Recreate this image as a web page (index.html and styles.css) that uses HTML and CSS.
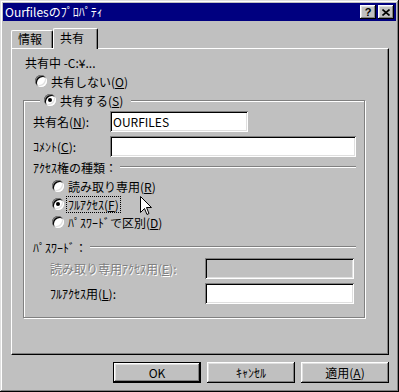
FILE: index.html
```html
<!DOCTYPE html>
<html lang="ja">
<head>
    <meta charset="UTF-8">
    <title>Ourfilesのﾌﾟﾛﾊﾟﾃｨ</title>
    <link rel="stylesheet" href="styles.css">
</head>
<body>
    <div class="window">
        <div class="titlebar">
            <span class="title-text">Ourfilesのﾌﾟﾛﾊﾟﾃｨ</span>
            <span class="title-btn help">?</span>
            <span class="title-btn close">
                <svg width="8" height="7" viewBox="0 0 8 7"><path d="M0.5 0.5 L7.5 6.5 M7.5 0.5 L0.5 6.5" stroke="#000" stroke-width="1.6"/></svg>
            </span>
        </div>

        <div class="dialog">
            <div class="tabs">
                <div class="tab">情報</div>
                <div class="tab active">共有</div>
            </div>

            <div class="panel">
                <div class="share-path">共有中 -C:¥...</div>
                <div class="radio-row">
                    <span class="radio"></span>
                    <span class="radio-text">共有しない(<u>O</u>)</span>
                </div>

                <fieldset class="group">
                    <legend class="group-title">
                        <span class="radio checked"></span>
                        <span class="radio-text">共有する(<u>S</u>)</span>
                    </legend>

                    <div class="field-row first">
                        <label class="field-label">共有名(<u>N</u>):</label>
                        <input class="field name-field" type="text" value="OURFILES">
                    </div>
                    <div class="field-row">
                        <label class="field-label">ｺﾒﾝﾄ(<u>C</u>):</label>
                        <input class="field comment-field" type="text" value="">
                    </div>

                    <div class="section-label">
                        <span>ｱｸｾｽ権の種類：</span>
                        <span class="rule"></span>
                    </div>
                    <div class="radio-row sub first">
                        <span class="radio"></span>
                        <span class="radio-text">読み取り専用(<u>R</u>)</span>
                    </div>
                    <div class="radio-row sub">
                        <span class="radio checked"></span>
                        <span class="radio-text focus">ﾌﾙｱｸｾｽ(<u>F</u>)</span>
                    </div>
                    <div class="radio-row sub">
                        <span class="radio"></span>
                        <span class="radio-text">ﾊﾟｽﾜｰﾄﾞで区別(<u>D</u>)</span>
                    </div>

                    <div class="section-label pw">
                        <span>ﾊﾟｽﾜｰﾄﾞ：</span>
                        <span class="rule"></span>
                    </div>
                    <div class="pw-row first">
                        <label class="pw-label disabled">読み取り専用ｱｸｾｽ用(<u>E</u>):</label>
                        <input class="field pw-field" type="text" disabled>
                    </div>
                    <div class="pw-row">
                        <label class="pw-label">ﾌﾙｱｸｾｽ用(<u>L</u>):</label>
                        <input class="field pw-field" type="text">
                    </div>
                </fieldset>
            </div>

            <div class="buttons">
                <button class="btn default">OK</button>
                <button class="btn">ｷｬﾝｾﾙ</button>
                <button class="btn">適用(<u>A</u>)</button>
            </div>
        </div>

        <svg class="cursor" width="12" height="20" viewBox="0 0 12 20">
            <path d="M0.5 0.5 L0.5 16.5 L4.5 12.5 L7 18.5 L9 17.5 L6.5 11.5 L11.5 11.5 Z" fill="#fff" stroke="#000" stroke-width="1"/>
        </svg>
    </div>
</body>
</html>
```

FILE: styles.css
```css
* {
    box-sizing: border-box;
}
body {
    margin: 0;
    background-color: #c0c0c0;
    font-family: "Noto Sans CJK JP", "Noto Sans", sans-serif;
    font-size: 12px;
    color: #000;
}
u {
    text-decoration: underline;
    text-underline-offset: 1px;
}
.window {
    position: relative;
    width: 399px;
    height: 392px;
    padding: 3px;
    background-color: #c0c0c0;
    box-shadow: inset -1px -1px #000, inset 1px 1px #dfdfdf, inset -2px -2px #808080, inset 2px 2px #fff;
}
/* タイトルバー */
.titlebar {
    display: flex;
    align-items: center;
    height: 18px;
    padding-left: 2px;
    background-color: #000080;
    color: #fff;
}
.title-text {
    flex: 1;
    line-height: 18px;
}
.title-btn {
    display: flex;
    justify-content: center;
    align-items: center;
    width: 16px;
    height: 14px;
    margin-left: 2px;
    background-color: #c0c0c0;
    color: #000;
    box-shadow: inset -1px -1px #000, inset 1px 1px #fff, inset -2px -2px #808080, inset 2px 2px #dfdfdf;
}
.title-btn.help {
    font-family: "Liberation Sans", sans-serif;
    font-weight: bold;
    font-size: 11px;
    line-height: 14px;
}
.title-btn.close {
    margin-right: 2px;
}
.title-btn svg {
    display: block;
}
.dialog {
    padding: 7px 7px 0 8px;
}
/* タブ */
.tabs {
    display: flex;
    align-items: flex-end;
    height: 20px;
}
.tab {
    height: 18px;
    padding-left: 6px;
    line-height: 16px;
    border-top: 1px solid #fff;
    border-left: 1px solid #fff;
    border-right: 1px solid #000;
    border-top-left-radius: 2px;
    border-top-right-radius: 2px;
    box-shadow: inset -1px 0 #808080;
    background-color: #c0c0c0;
}
.tab:first-child {
    width: 42px;
}
.tab.active {
    position: relative;
    z-index: 1;
    width: 45px;
    height: 21px;
    margin-bottom: -1px;
    line-height: 17px;
}
.panel {
    height: 307px;
    padding: 0 8px 0 11px;
    border: 1px solid;
    border-color: #fff #000 #000 #fff;
    box-shadow: inset -1px -1px #808080;
}
.share-path {
    height: 18px;
    margin-top: 5px;
    padding-left: 2px;
    line-height: 18px;
}
/* ラジオボタン */
.radio-row {
    display: flex;
    align-items: center;
    height: 18px;
    padding-left: 12px;
}
.radio {
    position: relative;
    flex: none;
    width: 12px;
    height: 12px;
    border-radius: 50%;
    background-color: #fff;
    box-shadow: inset 1px 1px #808080, inset -1px -1px #fff, inset 2px 2px #000, inset -2px -2px #dfdfdf;
}
.radio.checked::after {
    content: "";
    position: absolute;
    left: 4px;
    top: 4px;
    width: 4px;
    height: 4px;
    border-radius: 50%;
    background-color: #000;
}
.radio-text {
    margin-left: 4px;
    line-height: 15px;
}
.radio-text.focus {
    margin-left: 3px;
    padding: 0 1px;
    outline: 1px dotted #000;
}
/* グループボックス */
.group {
    width: 342px;
    min-width: 0;
    margin: 1px 0 0 0;
    padding: 0 8px 13px 9px;
    border: 1px solid #808080;
    box-shadow: 1px 1px 0 #fff, inset 1px 1px 0 #fff;
}
.group-title {
    display: flex;
    align-items: center;
    height: 18px;
    margin-left: 7px;
    padding: 0 8px 0 4px;
    background-color: #c0c0c0;
}
.field-row {
    display: flex;
    align-items: center;
    height: 21px;
    margin-top: 4px;
}
.field-row.first {
    margin-top: 2px;
}
.field-label {
    width: 77px;
    flex: none;
}
.field {
    height: 21px;
    padding: 0 3px;
    border: none;
    outline: none;
    font: inherit;
    color: #000;
    background-color: #fff;
    box-shadow: inset 1px 1px #808080, inset -1px -1px #fff, inset 2px 2px #000, inset -2px -2px #dfdfdf;
}
.field:disabled {
    background-color: #c0c0c0;
}
.name-field {
    width: 138px;
}
.comment-field {
    flex: 1;
    min-width: 0;
}
.section-label {
    display: flex;
    align-items: center;
    height: 16px;
    margin-top: 2px;
}
.section-label.pw {
    margin-top: 8px;
}
.rule {
    flex: 1;
    height: 2px;
    margin-left: 3px;
    border-top: 1px solid #808080;
    border-bottom: 1px solid #fff;
}
.radio-row.sub {
    padding-left: 19px;
}
.radio-row.sub.first {
    margin-top: 2px;
}
.pw-row {
    display: flex;
    align-items: center;
    height: 21px;
    margin-top: 4px;
}
.pw-row.first {
    margin-top: 3px;
}
.pw-label {
    width: 172px;
    flex: none;
    padding-left: 17px;
}
.pw-label.disabled {
    color: #808080;
    text-shadow: 1px 1px 0 #fff;
}
.pw-field {
    width: 149px;
}
/* 下部ボタン */
.buttons {
    display: flex;
    justify-content: flex-end;
    gap: 6px;
    margin-top: 7px;
}
.btn {
    width: 88px;
    height: 21px;
    padding: 0;
    border: none;
    font: inherit;
    color: #000;
    background-color: #c0c0c0;
    box-shadow: inset -1px -1px #000, inset 1px 1px #fff, inset -2px -2px #808080, inset 2px 2px #dfdfdf;
}
.btn.default {
    border: 1px solid #000;
}
.cursor {
    position: absolute;
    left: 140px;
    top: 196px;
}
```
